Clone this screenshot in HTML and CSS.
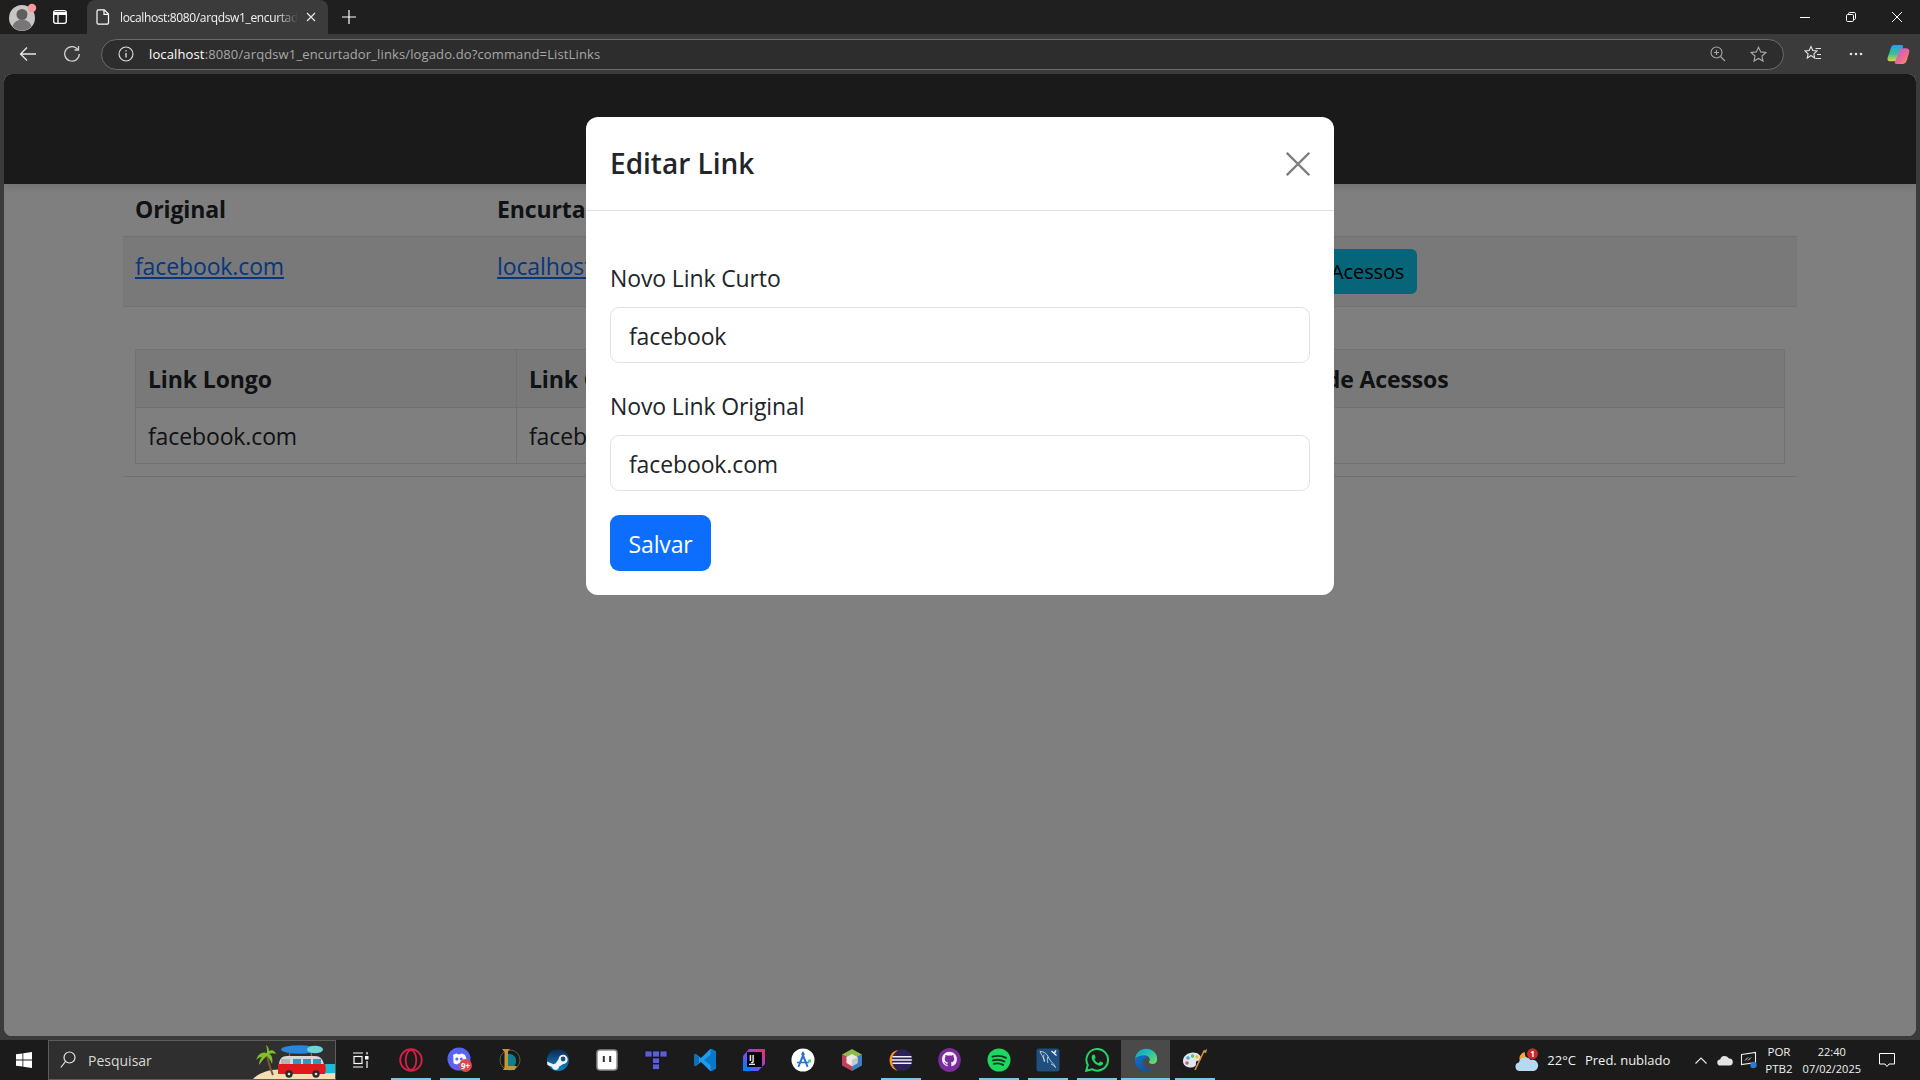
FILE: index.html
```html
<!DOCTYPE html>
<html lang="pt-BR">
<head>
<meta charset="utf-8">
<title>Editar Link</title>
<link rel="stylesheet" href="styles.css">
</head>
<body>
<div class="screen">
  <div class="tabbar">
    <div class="profile">
      <svg width="30" height="30" viewBox="0 0 30 30"><circle cx="14" cy="16" r="13" fill="#c9c6c1"/><circle cx="14" cy="12.5" r="5.5" fill="#5f5f5f"/><path d="M4.500 24.500c1.500-5 5.500-7 9.500-7s8 2 9.500 7a13 13 0 0 1-19 0z" fill="#777"/><circle cx="24" cy="6" r="4.200" fill="#f59a9a"/></svg>
    </div>
    <div class="tabtool">
      <svg width="16" height="16" viewBox="0 0 16 16" fill="none" stroke="#fff" stroke-width="1.300"><rect x="1.700" y="1.700" width="12.600" height="12.600" rx="2"/><path d="M1.700 4.500h12.600" stroke-width="3"/><path d="M6 3v11"/></svg>
    </div>
    <div class="tab">
      <svg class="tabfile" width="14" height="16" viewBox="0 0 14 16" fill="none" stroke="#fff" stroke-width="1.200"><path d="M2.500.8h5.800l4.200 4.200v8.700a1.500 1.500 0 0 1-1.500 1.500H2.500A1.500 1.500 0 0 1 1 13.700V2.300A1.500 1.500 0 0 1 2.500.8z"/><path d="M8 1v4.300h4.500"/></svg>
      <span class="tabtitle">localhost:8080/arqdsw1_encurtador_links/logado.do?command=ListLinks</span>
      <svg width="10" height="10" viewBox="0 0 10 10" stroke="#e6e6e6" stroke-width="1.200"><path d="M1 1l8 8M9 1l-8 8"/></svg>
    </div>
    <div class="newtab">
      <svg width="14" height="14" viewBox="0 0 14 14" stroke="#fff" stroke-width="1.200"><path d="M7 0v14M0 7h14"/></svg>
    </div>
    <div class="winbtns">
      <svg width="10" height="10" viewBox="0 0 10 10" stroke="#fff"><path d="M0 5.500h10"/></svg>
      <svg width="10" height="10" viewBox="0 0 10 10" fill="none" stroke="#fff"><rect x=".5" y="2.500" width="7" height="7" rx="1.200"/><path d="M2.500 2.500V1.700C2.500 1 3 .5 3.700.5h4.600c.7 0 1.200.5 1.200 1.200v4.600c0 .7-.5 1.200-1.200 1.200h-.8"/></svg>
      <svg width="10" height="10" viewBox="0 0 10 10" stroke="#fff"><path d="M0 0l10 10M10 0L0 10"/></svg>
    </div>
  </div>

  <div class="toolbar">
    <svg class="back" width="18" height="16" viewBox="0 0 18 16" fill="none" stroke="#e8e8e8" stroke-width="1.300"><path d="M17 8H1.500M8 1.500L1.500 8 8 14.500"/></svg>
    <svg class="reload" width="18" height="18" viewBox="0 0 18 18" fill="none" stroke="#d0d0d0" stroke-width="1.300"><path d="M15 4.700A7.300 7.300 0 1 0 16.300 9"/><path d="M15.500 1v4h-4"/></svg>
    <div class="address">
      <svg width="16" height="16" viewBox="0 0 16 16" fill="none" stroke="#e0e0e0" stroke-width="1.100"><circle cx="8" cy="8" r="7"/><path d="M8 7v4.500" stroke-width="1.300"/><path d="M8 4.300v1.300" stroke-width="1.300"/></svg>
      <span class="url"><b>localhost</b>:8080/arqdsw1_encurtador_links/logado.do?command=ListLinks</span>
      <svg class="zoomic" width="16" height="16" viewBox="0 0 16 16" fill="none" stroke="#a8a8a8" stroke-width="1.100"><circle cx="6.500" cy="6.500" r="5.500"/><path d="M10.500 10.500L15 15M4 6.500h5M6.500 4v5"/></svg>
      <svg class="staric" width="17" height="17" viewBox="0 0 17 17" fill="none" stroke="#a8a8a8" stroke-width="1.100"><path d="M8.500 1.200l2.200 4.700 5.100.6-3.800 3.500 1 5.100-4.500-2.600L4 15.100l1-5.100L1.200 6.500l5.100-.6z"/></svg>
    </div>
    <div class="tools">
      <svg width="18" height="18" viewBox="0 0 18 18" fill="none" stroke="#e6e6e6" stroke-width="1.100"><path d="M7 1.500l1.800 4 4.200.5-3.100 2.900.8 4.200L7 10.500l-3.700 2.600.8-4.200L1 6l4.200-.5z"/><path d="M11.500 3.500H17M13 9.500h4M11.500 13.500H17"/></svg>
      <svg class="moreic" width="14" height="4" viewBox="0 0 14 4" fill="#e6e6e6"><circle cx="2" cy="2" r="1.300"/><circle cx="7" cy="2" r="1.300"/><circle cx="12" cy="2" r="1.300"/></svg>
      <svg width="23" height="21" viewBox="0 0 22 20"><defs><linearGradient id="cpa" x1="0" y1="0" x2="0" y2="1"><stop offset="0" stop-color="#2d9cf0"/><stop offset=".55" stop-color="#35c48f"/><stop offset="1" stop-color="#e8d23c"/></linearGradient><linearGradient id="cpb" x1="0" y1="0" x2="1" y2="1"><stop offset="0" stop-color="#b75be0"/><stop offset=".6" stop-color="#ef6a8e"/><stop offset="1" stop-color="#f7a24a"/></linearGradient></defs><path d="M7 1h7c1 0 1.600.8 1.300 1.700L11 15c-.4 1-1.200 1.500-2.200 1.500H3C1 16.500 0 15 .6 13L4 3C4.500 1.700 5.600 1 7 1z" fill="url(#cpa)"/><path d="M18 4c2.300 0 3.800 1.600 3.300 3.800L19 15.500c-.6 2-2 3.500-4 3.500H9c-1.300 0-1.800-.9-1.400-1.900L12 6c.5-1.300 1.700-2 3-2z" fill="url(#cpb)"/></svg>
    </div>
  </div>

  <div class="viewport">
    <nav class="navbar"></nav>
    <main class="container">
      <table class="links">
        <thead>
          <tr><th class="c1">Original</th><th class="c2">Encurtado</th><th></th></tr>
        </thead>
        <tbody>
          <tr>
            <td><a href="#">facebook.com</a></td>
            <td><a href="#">localhost:8080/arqdsw1_encurtador_links/facebook</a></td>
            <td><span class="btn-info">Ver Acessos</span></td>
          </tr>
        </tbody>
      </table>
      <div class="details">
        <table class="stats">
          <thead>
            <tr><th class="s1">Link Longo</th><th class="s2">Link Curto</th><th>Número de Acessos</th></tr>
          </thead>
          <tbody>
            <tr><td>facebook.com</td><td>facebook</td><td>0</td></tr>
          </tbody>
        </table>
      </div>
    </main>
    <div class="backdrop"></div>
    <div class="modal">
      <header class="modal-head">
        <h2>Editar Link</h2>
        <svg width="24" height="24" viewBox="0 0 24 24" stroke="#808080" stroke-width="2.300"><path d="M.8.800l22.400 22.400M23.200.8L.8 23.200"/></svg>
      </header>
      <form class="modal-body">
        <label>Novo Link Curto</label>
        <div class="input">facebook</div>
        <label>Novo Link Original</label>
        <div class="input">facebook.com</div>
        <div class="save">Salvar</div>
      </form>
    </div>
  </div>

  <div class="taskbar">
    <div class="start">
      <svg width="16" height="16" viewBox="0 0 16 16" fill="#fff"><path d="M0 2.300l6.500-.9v6.200H0zM7.300 1.300L16 0v7.600H7.300zM0 8.400h6.500v6.200L0 13.700zM7.300 8.400H16V16l-8.700-1.200z"/></svg>
    </div>
    <div class="search">
      <svg width="16" height="18" viewBox="0 0 16 18" fill="none" stroke="#e6e6e6" stroke-width="1.200"><circle cx="9.500" cy="6.500" r="5.500"/><path d="M5.500 10.500L.8 16.500"/></svg>
      <span>Pesquisar</span>
      <svg class="van" width="82" height="38" viewBox="0 0 82 38">
        <path d="M70 23h12v15H40z" fill="#18bcd8"/>
        <path d="M0 38c8-8 20-11 34-9 16 2 32 4 48 3v6z" fill="#f2dfb4"/>
        <path d="M14 13c1 8 3 14 6 21" stroke="#7b5a33" stroke-width="2" fill="none"/>
        <path d="M14 12C9 10 5 13 3 19c2-2 4-3 6-3-2 2-3 5-3 8 3-4 5-7 8-9 2 2 4 5 5 8 1-5 0-9-3-10 2-1 5-1 7 0-1-3-4-5-7-3 0-2-1-5-3-6 1 3 1 5 1 8z" fill="#7fbf2d"/>
        <ellipse cx="46" cy="8.500" rx="18" ry="4.200" fill="#2a86d8"/>
        <ellipse cx="62" cy="8.500" rx="8" ry="3.800" fill="#6fd3d8"/>
        <path d="M37 12l-1 4M58 12l1 4" stroke="#777" stroke-width="1.200"/>
        <path d="M26 24c0-6 3-9 8-9h28c5 0 8 3 9 9z" fill="#d8d8d4"/>
        <path d="M25 23h47c1 3 1 7 0 10H25z" fill="#e01a1a"/>
        <rect x="28" y="18" width="9" height="5" fill="#b5b5b5"/>
        <rect x="40" y="18" width="8" height="5" fill="#2b9bc0"/><rect x="50" y="18" width="8" height="5" fill="#2b9bc0"/><rect x="60" y="18" width="8" height="5" fill="#2b9bc0"/>
        <circle cx="36" cy="33" r="3.700" fill="#2a2a2a"/><circle cx="36" cy="33" r="1.300" fill="#ddd"/><circle cx="63" cy="33" r="3.700" fill="#2a2a2a"/><circle cx="63" cy="33" r="1.300" fill="#ddd"/>
      </svg>
    </div>
    <div class="taskview">
      <svg width="16" height="16" viewBox="0 0 16 16" fill="none" stroke="#fff" stroke-width="1.200"><path d="M0 1h10M0 15h10"/><rect x="1" y="4.500" width="8" height="7"/><rect x="12" y="4" width="3.500" height="3.500" fill="#fff" stroke="none"/><path d="M14 0v2.500M14 9v7"/></svg>
    </div>
    <div class="slot on"><svg width="24" height="24" viewBox="0 0 24 24" fill="none" stroke="#d81f45" stroke-width="1.800"><circle cx="12" cy="12" r="10.800"/><ellipse cx="12" cy="12" rx="5.300" ry="9.800"/></svg></div>
    <div class="slot on"><svg width="26" height="26" viewBox="0 0 26 26"><circle cx="12" cy="12" r="11.500" fill="#5865f2"/><path d="M6 8c2-1.300 3.500-1.500 4-1.500l.4.800c1-.2 2.200-.2 3.200 0l.4-.8c.5 0 2 .2 4 1.500 1.300 2.500 1.800 5 1.500 8-1.300 1-2.700 1.400-3.700 1.500l-.8-1.200-3.900.1-.9 1.100C9 17.400 7.700 17 6.500 16c-.3-3 .2-5.500-.5-8z" fill="#fff"/><circle cx="9.800" cy="12" r="1.500" fill="#5865f2"/><circle cx="14.300" cy="12" r="1.500" fill="#5865f2"/><circle cx="18.500" cy="18.500" r="6.500" fill="#e0474c"/><text x="18.500" y="21.500" class="badge9">9+</text></svg></div>
    <div class="slot"><svg width="24" height="24" viewBox="0 0 24 24"><circle cx="13" cy="12" r="10" fill="#0f1c20" stroke="#6d5a2b"/><path d="M9 6c7-1 10 3 10 7s-2 6-4 6H10z" fill="#0a7f8e"/><path d="M5 1h8l-2 2.500V18h9l-2.500 4H6l1.500-2.500V4z" fill="#c8963a"/></svg></div>
    <div class="slot"><svg width="24" height="24" viewBox="0 0 24 24"><defs><linearGradient id="stm" x1="0" y1="0" x2="0" y2="1"><stop offset="0" stop-color="#10254e"/><stop offset=".5" stop-color="#0d5a92"/><stop offset="1" stop-color="#0e86bd"/></linearGradient></defs><circle cx="12" cy="12" r="11" fill="url(#stm)"/><path d="M1 13.500l6.500 2.700a3.400 3.400 0 0 1 2-.6l3-4.300a4.600 4.600 0 1 1 4.600 4.700L13 18.800a3.500 3.500 0 0 1-6.900.3L1.400 17z" fill="#eef3f6"/><circle cx="17.100" cy="11" r="2.400" fill="#1b4d7c"/></svg></div>
    <div class="slot"><svg width="22" height="22" viewBox="0 0 22 22"><rect x="1" y="1" width="20" height="20" rx="3" fill="#fff" stroke="#8e8e8e" stroke-width="1.500"/><path d="M7.800 7v6M14.200 7v6" stroke="#333" stroke-width="2"/></svg></div>
    <div class="slot"><svg width="24" height="24" viewBox="0 0 24 24" fill="#5a5fd8" stroke="#15151c" stroke-width=".8"><rect x="1" y="3" width="7" height="6"/><rect x="8.500" y="3" width="7" height="6"/><rect x="16" y="3" width="7" height="6"/><rect x="8.500" y="10" width="7" height="5.500"/><rect x="8.500" y="16" width="7" height="5.500"/></svg></div>
    <div class="slot"><svg width="24" height="24" viewBox="0 0 24 24"><path d="M17.500.8L23 3.300v17.400l-5.500 2.500L8 14l-5.500 4.300L1 17V7l1.500-1.300L8 10z" fill="#1f9cf0"/><path d="M17.500 6.800L11 12l6.500 5.200zM17.500.8L23 3.300v17.400l-5.500 2.500z" fill="#0a78c8"/><path d="M2.500 5.700L1 7v10l1.500 1.300L6 15V9z" fill="#0d6fb8"/></svg></div>
    <div class="slot"><svg width="24" height="24" viewBox="0 0 24 24"><defs><linearGradient id="ijg" x1="0" y1="1" x2="1" y2="0"><stop offset="0" stop-color="#087cfa"/><stop offset=".55" stop-color="#9545e0"/><stop offset="1" stop-color="#fe2857"/></linearGradient></defs><path d="M7 1h15c.6 0 1 .4 1 1v14l-7 7H2c-.6 0-1-.4-1-1V8z" fill="url(#ijg)"/><path d="M1 12L10 23H2c-.6 0-1-.4-1-1z" fill="#087cfa"/><rect x="5" y="4" width="15" height="15" fill="#000"/><text x="7" y="13" class="ijtext">IJ</text><path d="M7 16.300h6" stroke="#fff" stroke-width="1.200"/></svg></div>
    <div class="slot"><svg width="24" height="24" viewBox="0 0 24 24"><circle cx="12" cy="12" r="11.500" fill="#fff"/><path d="M12 3l2 3.500-1 .8 4.500 11.200-1.700.7L12 10.200 8.200 19.200l-1.700-.7L11 7.300l-1-.8z" fill="#2a6fd6"/><path d="M6 14.500h12" stroke="#2a6fd6" stroke-width="1.500"/><rect x="17" y="11.500" width="3" height="3" fill="#3ddc84"/></svg></div>
    <div class="slot"><svg width="24" height="24" viewBox="0 0 24 24"><path d="M12 1l10 5.500L12 12 2 6.500z" fill="#8fb84a"/><path d="M2 6.500L12 12v11L2 17.500z" fill="#c2405a"/><path d="M22 6.500L12 12v11l10-5.500z" fill="#3f7fbf"/><path d="M12 6l5.500 3v6L12 18.200 6.500 15V9z" fill="#e8e8e4"/><path d="M12 12l5.500-3v6L12 18.200z" fill="#c8c8c4"/></svg></div>
    <div class="slot on"><svg width="24" height="24" viewBox="0 0 24 24"><circle cx="12.800" cy="12" r="10.800" fill="#2c2255"/><path d="M3 5C-.5 9.500-.2 16 3.500 20c1.500 1.500 3.500 2.500 5.500 2.800C4 20 2.200 14 3.500 9c.5-1.700 1.500-3.200 2.800-4.500 1-1 2-1.700 3-2.300C7 2.500 4.700 3.300 3 5z" fill="#f7941e"/><path d="M3.500 8.800h19M2.800 12h20M3.500 15.200h19" stroke="#f2f0fa" stroke-width="1.500"/></svg></div>
    <div class="slot"><svg width="23" height="24" viewBox="0 0 16 17"><ellipse cx="8" cy="8.500" rx="8" ry="8.500" fill="#7b2d9e"/><g transform="translate(2.700 2.700) scale(.66)"><path d="M8 0C3.580 0 0 3.580 0 8c0 3.540 2.290 6.530 5.470 7.590.4.070.55-.17.55-.38 0-.19-.01-.82-.01-1.490-2.010.37-2.530-.49-2.690-.94-.09-.23-.48-.94-.82-1.130-.28-.15-.68-.52-.01-.53.630-.01 1.080.58 1.230.82.720 1.210 1.870.87 2.330.66.070-.52.280-.87.510-1.070-1.780-.2-3.640-.89-3.640-3.950 0-.87.310-1.590.820-2.150-.08-.2-.36-1.020.08-2.120 0 0 .67-.21 2.200.82.640-.18 1.320-.27 2-.27s1.360.09 2 .27c1.530-1.040 2.200-.82 2.200-.82.440 1.100.16 1.920.08 2.120.51.560.82 1.270.82 2.150 0 3.070-1.870 3.750-3.650 3.950.29.250.54.730.54 1.480 0 1.070-.01 1.930-.01 2.200 0 .21.150.46.550.38A8.010 8.010 0 0 0 16 8c0-4.420-3.580-8-8-8z" fill="#f4eef8"/></g></svg></div>
    <div class="slot on"><svg width="24" height="24" viewBox="0 0 24 24"><circle cx="12" cy="12" r="11.500" fill="#1ed760"/><path d="M5.500 8.700c4.500-1.300 9.500-1 13.500 1.200M6 12.400c3.800-1 8-.7 11.500 1.100M6.800 15.800c3.200-.8 6.500-.5 9.400 1" fill="none" stroke="#14331f" stroke-width="1.900" stroke-linecap="round"/></svg></div>
    <div class="slot on"><svg width="24" height="24" viewBox="0 0 24 24"><rect x=".5" y=".5" width="23" height="23" rx="2.500" fill="#1f4f7c"/><path d="M4 3.500c3.500 0 6.500 1.500 8 5 1 2.500 3 5 5 7 .8.800 2 2.500 2.500 4-1.500-2-3-3-4.500-3.500M4 3.500c.5 2 2 3.500 3 5.500.7 1.500 1 3.500 1.500 5M8 6.500c-.5 2-.5 4 .5 6.500M12 8.500c-1 2-1 4.500 0 6.500" fill="none" stroke="#c8dcea" stroke-width=".9"/><path d="M15.500 3l5 4.500M20 2.500l-2 3" stroke="#e8eef2" stroke-width="1.400"/></svg></div>
    <div class="slot on"><svg width="24" height="24" viewBox="0 0 24 24"><path d="M1.200 22.800l1.600-5.800A10.800 10.800 0 1 1 7 21.200z" fill="none" stroke="#25d366" stroke-width="2"/><path d="M8.600 6.500c.4 0 .8 0 1 .6l.9 2.100c.1.300.1.600-.1.800l-.8 1c-.2.200-.2.400-.1.700.9 1.500 2.100 2.600 3.700 3.300.3.100.5.100.7-.1l1-1.200c.2-.3.500-.3.800-.2l2 1c.4.200.5.400.4.800-.2 1.600-1.700 2.400-3 2.400-4-.3-8.500-4.500-8.400-8.500 0-1.300.8-2.700 1.900-2.700z" fill="#25d366"/></svg></div>
    <div class="slot active"><svg width="24" height="24" viewBox="0 0 24 24"><defs><linearGradient id="edg1" x1="0" y1="0" x2="1" y2="1"><stop offset="0" stop-color="#0d9bd8"/><stop offset=".5" stop-color="#2cc2a8"/><stop offset="1" stop-color="#7be05b"/></linearGradient><linearGradient id="edg2" x1="0" y1="0" x2="1" y2="1"><stop offset="0" stop-color="#1170c8"/><stop offset="1" stop-color="#0b4f9e"/></linearGradient></defs><path d="M1 11C2 4.500 6.500 .8 12 .8c6.500 0 11.200 4.800 11.200 10.200 0 3-1.800 5-4.700 5-2 0-3.500-.9-3.500-2 0-.6.800-1 .8-2.500 0-2.400-2.400-4-5.300-4C6 7.500 2.500 9 1 11z" fill="url(#edg1)"/><path d="M1 11c-.8 6.500 4.500 12.200 11 12.200 2.500 0 4.700-.8 6.500-2.300-3.500 1-7.500-.2-9-3.500-1.200-2.700-.3-5.700 2-7.400.8-.6 1.700-1 2.500-1.100-1-.6-2.200-1.400-3.800-1.400C6 7.500 2.500 9 1 11z" fill="url(#edg2)"/></svg></div>
    <div class="slot on"><svg width="26" height="24" viewBox="0 0 26 24"><path d="M1 13c0-5 5-8.500 10-8.500 5 0 8 3 8 6 0 2-2.500 2-4 2.500-1.500.5-1 2-1 3 0 2-2 3.500-5 3.500C4 19.500 1 17 1 13z" fill="#dfe7ee"/><circle cx="6" cy="10" r="1.800" fill="#4aa3e0"/><circle cx="10.500" cy="8" r="1.800" fill="#5ec45e"/><circle cx="15" cy="9" r="1.800" fill="#e8c33c"/><circle cx="5" cy="15" r="1.800" fill="#e25555"/><path d="M22.500 2L13 22" stroke="#d98a3a" stroke-width="1.600"/><path d="M21.500 4l2.500 1.200 1.200-4.700z" fill="#c9a26a"/></svg></div>
    <div class="tray">
      <div class="weather">
        <svg width="24" height="24" viewBox="0 0 24 24"><path d="M5 13a6.500 6.500 0 0 1 5-9 5.500 5.500 0 0 0 5 7z" fill="#f2a93b"/><path d="M4.500 23a4.300 4.300 0 0 1-.6-8.500 6.500 6.500 0 0 1 11.700-2.500 5.500 5.500 0 0 1 3.500 11z" fill="#b6d9f2"/><circle cx="17.500" cy="5.800" r="5.500" fill="#c42b2b"/><text x="17.500" y="9" class="badge1">1</text></svg>
        <span>22°C</span>
        <span class="wtext">Pred. nublado</span>
      </div>
      <svg class="chev" width="12" height="7" viewBox="0 0 12 7" fill="none" stroke="#eee" stroke-width="1.100"><path d="M.5 6.500l5.500-5.500 5.500 5.500"/></svg>
      <svg class="cloud" width="16" height="11" viewBox="0 0 16 11" fill="#e4e4e4"><path d="M3.500 10.500a3 3 0 0 1-.4-6A4.800 4.800 0 0 1 12 3.500a3.500 3.500 0 0 1 .5 7z"/></svg>
      <svg class="meet" width="18" height="18" viewBox="0 0 18 18" fill="none" stroke="#eee" stroke-width="1.100"><path d="M1.500 3.500l14-2v10l-14 2z"/><path d="M5 9.500l3-3M8 9.500l3-3" stroke-width=".9"/><circle cx="13.500" cy="14" r="3.200" fill="#2b7bd0" stroke="none"/></svg>
      <div class="lang"><span>POR</span><span>PTB2</span></div>
      <div class="clock"><span>22:40</span><span>07/02/2025</span></div>
      <svg class="notif" width="16" height="16" viewBox="0 0 16 16" fill="none" stroke="#fff" stroke-width="1"><path d="M.5 1.500h15v10.500h-5.500L8 14.500 6 12H.5z"/></svg>
    </div>
  </div>
</div>
</body>
</html>
```

FILE: styles.css
```css
* { box-sizing: border-box; }
html, body { margin: 0; padding: 0; }
body { font-family: "Open Sans", "Liberation Sans", sans-serif; color: #212529; }
svg { display: block; flex: none; }

.screen { width: 1920px; height: 1080px; display: flex; flex-direction: column; background: #3b3b3b; overflow: hidden; }

/* Browser chrome */
.tabbar { height: 34px; flex: none; background: #1f1f1f; display: flex; align-items: center; color: #fff; }
.profile { width: 44px; padding-left: 8px; }
.tabtool { width: 43px; display: flex; justify-content: center; margin-left: -6px; margin-right: 6px; }
.tab { width: 241px; height: 34px; background: #3b3b3b; border-radius: 8px 8px 0 0; display: flex; align-items: center; padding: 0 12px 0 9px; }
.tabfile { margin-right: 10px; }
.tabtitle { flex: 1; font-size: 12px; letter-spacing: -.36px; white-space: nowrap; overflow: hidden; color: #f2f2f2;
  -webkit-mask-image: linear-gradient(to right, #000 88%, transparent 100%); mask-image: linear-gradient(to right, #000 88%, transparent 100%); margin-right: 8px; }
.newtab { margin-left: 14px; }
.winbtns { margin-left: auto; display: flex; gap: 36px; padding-right: 18px; }

.toolbar { height: 40px; flex: none; background: #3b3b3b; display: flex; align-items: center; padding-left: 19px; }
.back { margin-right: 26px; }
.reload { margin-right: 20px; }
.address { width: 1683px; height: 31px; border: 1px solid #6a6a6a; border-radius: 16px; background: #2d2d2d; display: flex; align-items: center; padding: 0 11px 0 16px; }
.url { font-size: 13px; letter-spacing: .13px; color: #a8a8a8; margin-left: 15px; white-space: nowrap; }
.url b { font-weight: 400; color: #fff; }
.zoomic { margin-left: auto; margin-right: 24px; }
.staric { margin-right: 5px; }
.tools { display: flex; align-items: center; margin-left: 20px; gap: 27px; }
.moreic { margin-right: -3px; }

/* Web page */
.viewport { flex: 1; margin: 0 4px 4px; position: relative; background: #fff; border-radius: 8px; overflow: hidden; }
.navbar { height: 110px; background: #343434; position: relative; box-shadow: 0 4px 8px rgba(0,0,0,.1); }
.container { margin: 0 119px; }
table { border-collapse: collapse; table-layout: fixed; font-size: 23px; letter-spacing: -.12px; width: 100%; }
th { font-weight: 700; text-align: left; }
.links th { padding: 6px 12px 8px; height: 52px; border-bottom: 1px solid #dee2e6; color: #212529; }
.links td { padding: 13px 12px 12px; height: 70px; vertical-align: top; background: #f2f2f2; border-bottom: 1px solid #dee2e6; white-space: nowrap; overflow: hidden; }
.links td a { color: #0d6efd; }
.c1 { width: 362px; }
.c2 { width: 785px; }
.btn-info { display: inline-block; background: #0dcaf0; color: #000; border-radius: 6px; padding: 0 13px; margin-top: -1px; height: 45px; font-size: 20px; line-height: 46px; vertical-align: top; }
.details { padding: 42px 12px 12px; border-bottom: 1px solid #dee2e6; }
.stats th, .stats td { border: 1px solid #dee2e6; padding: 0 12px; }
.stats th { height: 58px; padding-top: 1px; background: #f2f2f2; }
.stats td { height: 56px; padding-top: 2px; }
.s1 { width: 381px; }
.s2 { width: 697px; }

.backdrop { position: absolute; inset: 0; background: rgba(0,0,0,.5); }
.modal { position: absolute; left: 582px; top: 43px; width: 748px; background: #fff; border-radius: 12px; }
.modal-head { height: 94px; padding: 0 24px; border-bottom: 1px solid #dee2e6; display: flex; align-items: center; justify-content: space-between; }
.modal-head h2 { margin: 0; padding-top: 1px; font-size: 28px; font-weight: 600; line-height: 1.2; }
.modal-body { padding: 48px 24px 24px; display: flex; flex-direction: column; align-items: flex-start; font-size: 23px; letter-spacing: -.12px; }
.modal-body label { line-height: 38px; height: 36px; margin-bottom: 12px; }
.input { width: 100%; height: 56px; border: 1px solid #dee2e6; border-radius: 9px; padding: 0 18px; line-height: 56px; margin-bottom: 24px; }
.save { background: #0d6efd; color: #fff; border-radius: 9px; line-height: 58px; height: 56px; padding: 0 18.5px; }

/* Windows taskbar */
.taskbar { height: 40px; flex: none; background: #1b1b1b; display: flex; align-items: center; color: #fff; }
.start { width: 48px; display: flex; justify-content: center; }
.search { width: 288px; height: 40px; background: #2f2f2f; border: 1px solid #5c5c5c; display: flex; align-items: center; padding-left: 11px; font-size: 14px; color: #d8d8d8; overflow: hidden; }
.search span { margin-left: 12px; }
.van { margin-left: auto; }
.taskview { width: 50px; display: flex; justify-content: center; }
.slot { width: 49px; height: 40px; display: flex; align-items: center; justify-content: center; position: relative; }
.slot.on::after { content: ""; position: absolute; left: 5px; right: 4px; bottom: 0; height: 2px; background: #76c9ee; }
.slot.active { background: #4a4a4a; }
.slot.active::after { content: ""; position: absolute; left: 0; right: 0; bottom: 0; height: 2px; background: #76c9ee; }
.badge9 { font: 700 8px "Open Sans", sans-serif; fill: #fff; text-anchor: middle; }
.badge1 { font: 700 8px "Open Sans", sans-serif; fill: #fff; text-anchor: middle; }
.ijtext { font: 700 8px "Open Sans", sans-serif; fill: #fff; }

.tray { margin-left: auto; display: flex; align-items: center; font-size: 13px; color: #f0f0f0; }
.weather { display: flex; align-items: center; gap: 8px; }
.wtext { margin-left: 1px; }
.chev { margin-left: 25px; }
.cloud { margin-left: 10px; }
.meet { margin-left: 7px; }
.lang { display: flex; flex-direction: column; align-items: center; font-size: 11.5px; line-height: 17px; margin-left: 7px; }
.clock { display: flex; flex-direction: column; align-items: center; font-size: 11px; line-height: 17px; margin-left: 10px; }
.notif { margin-left: 18px; margin-right: 25px; }
```
